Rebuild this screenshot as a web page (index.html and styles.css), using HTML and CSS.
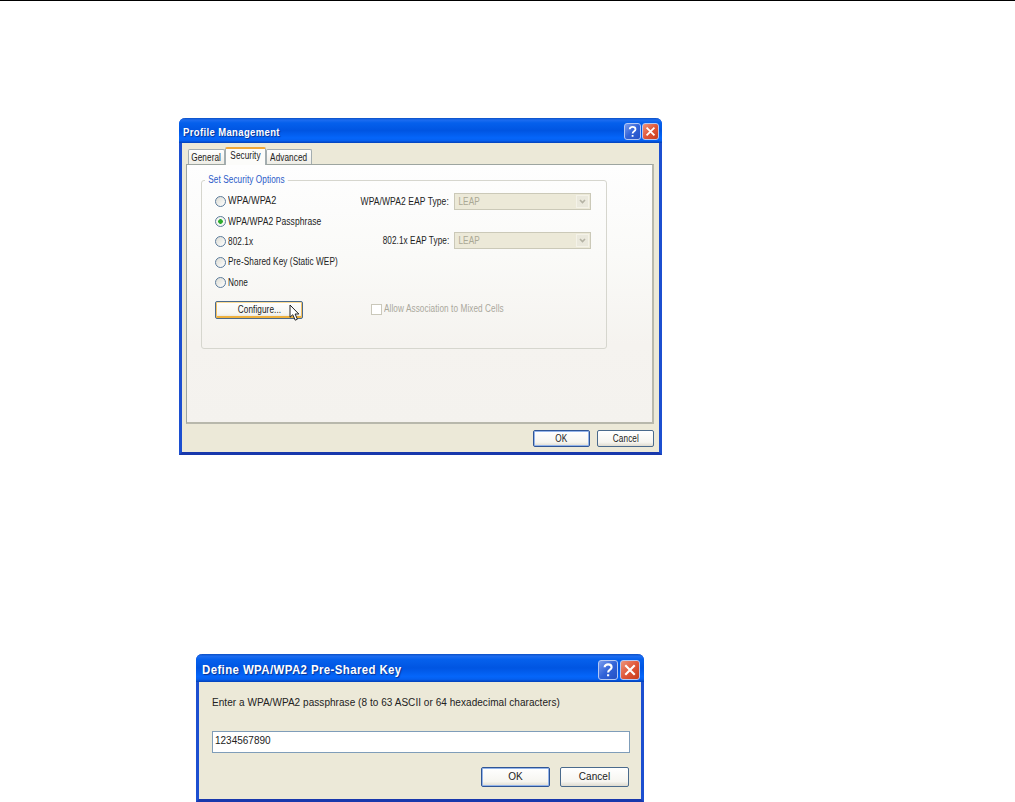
FILE: index.html
```
<!DOCTYPE html>
<html lang="en">
<head>
    <meta charset="UTF-8">
    <meta name="viewport" content="width=device-width, initial-scale=1.0">
    <title>Profile Management</title>
    <link rel="stylesheet" href="styles.css">
</head>
<body>
    <!-- Profile Management -->
    <div class="window profile">
        <div class="titlebar">
            <div class="title"><span>Profile Management</span></div>
            <button class="tool help"><svg viewBox="0 0 16 16"><path d="M5 5.6C5 2.2 11.2 2.2 11.2 5.6C11.2 7.8 8.1 7.6 8.1 10.2M8.1 11.8V13.6"/></svg></button>
            <button class="tool close"><svg viewBox="0 0 16 16"><path d="M3.8 3.8L12.2 12.2M12.2 3.8L3.8 12.2"/></svg></button>
        </div>
        <div class="tabs">
            <div class="tab"><span>General</span></div>
            <div class="tab active"><span>Security</span></div>
            <div class="tab"><span>Advanced</span></div>
        </div>
        <div class="panel">
            <div class="group">
                <div class="legend"><span>Set Security Options</span></div>
                <div class="columns">
                    <div class="left">
                        <div class="option"><i class="radio"></i><span class="wider">WPA/WPA2</span></div>
                        <div class="option"><i class="radio checked"></i><span class="wide">WPA/WPA2 Passphrase</span></div>
                        <div class="option"><i class="radio"></i><span>802.1x</span></div>
                        <div class="option"><i class="radio"></i><span>Pre-Shared Key (Static WEP)</span></div>
                        <div class="option"><i class="radio"></i><span>None</span></div>
                        <button class="btn configure"><span>Configure...</span>
                            <svg class="cursor" viewBox="0 0 11 18"><path d="M1 1V13.2L3.8 10.7L6.2 16.2L8.4 15.2L6.1 10H9.8Z"/></svg>
                        </button>
                    </div>
                    <div class="right">
                        <div class="field">
                            <span class="label wide">WPA/WPA2 EAP Type:</span>
                            <div class="select"><span>LEAP</span><i class="arrow"><svg viewBox="0 0 11 11"><path d="M3 4L5.5 6.5L8 4"/></svg></i></div>
                        </div>
                        <div class="field">
                            <span class="label">802.1x EAP Type:</span>
                            <div class="select"><span>LEAP</span><i class="arrow"><svg viewBox="0 0 11 11"><path d="M3 4L5.5 6.5L8 4"/></svg></i></div>
                        </div>
                        <div class="mixed"><i class="checkbox"></i><span>Allow Association to Mixed Cells</span></div>
                    </div>
                </div>
            </div>
        </div>
        <div class="actions">
            <button class="btn default"><span>OK</span></button>
            <button class="btn"><span>Cancel</span></button>
        </div>
    </div>

    <!-- Pre-Shared Key -->
    <div class="window psk">
        <div class="titlebar">
            <div class="title"><span>Define WPA/WPA2 Pre-Shared Key</span></div>
            <button class="tool help"><svg viewBox="0 0 16 16"><path d="M5 5.6C5 2.2 11.2 2.2 11.2 5.6C11.2 7.8 8.1 7.6 8.1 10.2M8.1 11.8V13.6"/></svg></button>
            <button class="tool close"><svg viewBox="0 0 16 16"><path d="M3.8 3.8L12.2 12.2M12.2 3.8L3.8 12.2"/></svg></button>
        </div>
        <p class="prompt">Enter a WPA/WPA2 passphrase (8 to 63 ASCII or 64 hexadecimal characters)</p>
        <input class="key" type="text" value="1234567890">
        <div class="actions">
            <button class="btn default">OK</button>
            <button class="btn">Cancel</button>
        </div>
    </div>
</body>
</html>
```
FILE: styles.css
```
* {
    box-sizing: border-box;
}
body {
    margin: 0;
    height: 802px;
    overflow: hidden;
    background-color: #ffffff;
    border-top: 1px solid #000000;
    font-family: "Liberation Sans", Arial, sans-serif;
    font-size: 10px;
    line-height: 12px;
    letter-spacing: 0.1px;
    color: #222222;
    white-space: nowrap;
}
.window {
    background-color: #ece9d8;
    border: 3px solid #1c4fd0;
    border-top: 0;
    border-bottom-color: #1838ac;
    border-radius: 6px 6px 0 0;
}
.profile {
    width: 483px;
    height: 337px;
    margin: 117px 0 0 179px;
}
.psk {
    width: 448px;
    height: 148px;
    margin: 199px 0 0 196px;
    letter-spacing: 0.05px;
}
/* narrow dialog lettering */
.profile span {
    display: inline-block;
    transform: scaleX(0.82);
    transform-origin: left center;
}
.profile .wide {
    transform: scaleX(0.85);
}
.profile .wider {
    transform: scaleX(0.91);
}
.profile .tab span,
.profile .btn span {
    transform-origin: center;
}
.profile .label {
    transform-origin: right center;
}
.titlebar {
    display: flex;
    align-items: center;
    height: 25px;
    margin: 0 -3px;
    padding: 2px 3px 0 4px;
    gap: 1px;
    border-radius: 6px 6px 0 0;
    background: linear-gradient(#0c4fc4 0, #1c6cf0 8%, #0560ec 20%, #0055e2 50%, #0566fa 80%, #0560f0 90%, #0340b8 100%);
}
.title {
    flex: 1;
    color: #ffffff;
    font-weight: bold;
    font-size: 11px;
    letter-spacing: 0.45px;
    text-shadow: 1px 1px 1px #0a3090;
}
.profile .title span {
    transform: scaleX(0.86);
}
.psk .title span {
    display: inline-block;
    transform: scaleX(0.88);
    transform-origin: left center;
}
.tool {
    width: 17px;
    height: 17px;
    padding: 0;
    border: 1px solid #b4c8f4;
    border-radius: 3px;
    background: linear-gradient(135deg, #7a9cee, #3263d8 50%, #2450c4);
}
.tool.close {
    background: linear-gradient(135deg, #ee947c, #e0583a 50%, #c83c1c);
}
.tool svg {
    display: block;
    width: 100%;
    height: 100%;
    fill: none;
    stroke: #ffffff;
    stroke-width: 1.9;
}
.tabs {
    display: flex;
    align-items: flex-end;
    height: 21px;
    padding-left: 6px;
}
.tab {
    display: flex;
    justify-content: center;
    width: 37px;
    height: 15px;
    border: 1px solid #a3adb0;
    border-bottom: 0;
    border-radius: 2px 2px 0 0;
    background: linear-gradient(#ffffff, #eeede6);
    line-height: 16px;
}
.tab.active {
    position: relative;
    z-index: 1;
    width: 41px;
    height: 18px;
    margin-bottom: -1px;
    border-top: 2px solid #f0a838;
    background: #fcfcfa;
    line-height: 14px;
}
.tab:last-child {
    width: 46px;
}
.panel {
    width: 468px;
    height: 260px;
    margin-left: 4px;
    padding: 15px 0 0 14px;
    border: 1px solid #9da5a0;
    border-right: 2px solid #b8b8ac;
    border-bottom: 2px solid #b8b8ac;
    background: linear-gradient(#fefefe, #fafaf8 35%, #f5f3ef 70%, #f4f2ee);
}
.group {
    width: 406px;
    height: 169px;
    border: 1px solid #d6d6ce;
    border-radius: 3px;
}
.legend {
    height: 11px;
    margin-top: -7px;
    padding-left: 3px;
    color: #2a5bc8;
}
.legend span {
    padding: 0 4px;
    background-color: #fdfdfd;
}
.columns {
    display: flex;
    padding: 6px 0 0 13px;
}
.left {
    width: 156px;
}
.option {
    display: flex;
    align-items: center;
    height: 20.4px;
    gap: 2px;
}
.radio {
    width: 11px;
    height: 11px;
    border: 1px solid #5c7c9c;
    border-radius: 50%;
    background: linear-gradient(135deg, #dcdcd4, #ffffff);
}
.radio.checked {
    background: radial-gradient(circle, #2eac2e 0, #2eac2e 2px, #f4f6f0 2.6px);
}
.btn {
    width: 57px;
    height: 17px;
    padding: 0;
    border: 1px solid #4a6a8c;
    border-radius: 2px;
    background: linear-gradient(#ffffff, #f6f5f0 75%, #dedbd0);
    color: #222222;
    font: inherit;
    letter-spacing: inherit;
    text-align: center;
}
.btn.default {
    border-color: #2f5596;
    box-shadow: inset 0 0 0 1px #94b4ea;
}
.configure {
    position: relative;
    display: block;
    width: 88px;
    height: 18px;
    margin-top: 8px;
    box-shadow: inset 0 1px 0 #fbdc98, inset 1px 0 0 #f4c060, inset -1px 0 0 #f4c060, inset 0 -2px 0 #eeb03c;
}
.cursor {
    position: absolute;
    left: 73px;
    top: 2px;
    width: 11px;
    height: 18px;
    fill: #ffffff;
    stroke: #222222;
    stroke-width: 1;
}
.right {
    width: 220px;
    padding-top: 2px;
}
.field {
    display: flex;
    align-items: center;
    justify-content: flex-end;
    gap: 5px;
    height: 17px;
    margin-bottom: 22px;
}
.select {
    display: flex;
    flex: none;
    justify-content: space-between;
    width: 137px;
    height: 17px;
    padding: 1px;
    border: 1px solid #cbc9b8;
    background-color: #ece9d8;
    color: #aaa894;
}
.select span {
    padding-left: 3px;
    line-height: 14px;
}
.arrow {
    width: 13px;
    height: 13px;
    border: 1px solid #f4f2e8;
    background-color: #eae8dc;
}
.arrow svg {
    display: block;
    fill: none;
    stroke: #b4b2a4;
    stroke-width: 1.6;
}
.mixed {
    display: flex;
    align-items: center;
    gap: 2px;
    margin-top: 54px;
    color: #aaa89c;
}
.checkbox {
    width: 11px;
    height: 11px;
    border: 1px solid #cac8ba;
    background-color: #ffffff;
}
.actions {
    display: flex;
    justify-content: flex-end;
    gap: 7px;
    padding: 6px 5px 0 0;
}

.psk .titlebar {
    height: 28px;
    padding: 3px 4px 0 6px;
    gap: 2px;
}
.psk .title {
    font-size: 13px;
}
.psk .tool {
    width: 20px;
    height: 20px;
}
.prompt {
    margin: 15px 0 0 13px;
}
.key {
    display: block;
    width: 418px;
    height: 22px;
    margin: 22px 0 0 13px;
    padding: 0 2px 3px;
    border: 1px solid #7f9db9;
    background-color: #ffffff;
    color: #222222;
    font: inherit;
}
.psk .actions {
    gap: 10px;
    padding: 14px 12px 0 0;
}
.psk .btn {
    width: 69px;
    height: 20px;
}
```
